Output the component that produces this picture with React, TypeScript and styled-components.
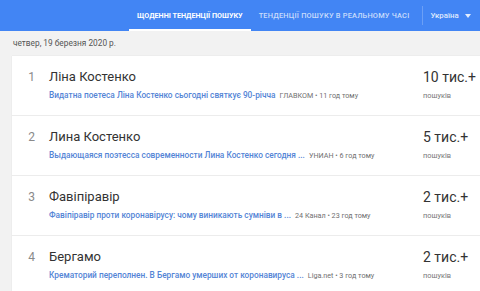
import React, {FC} from 'react';
import styled, {createGlobalStyle} from 'styled-components';

const Global = createGlobalStyle`
  html, body {
    margin: 0;
    padding: 0;
    background: #f2f2f2;
    font-family: Roboto, "Noto Sans", Arial, sans-serif;
    overflow: hidden;
  }
`;

const Header = styled.div`
  height: 31px;
  background: #4285f4;
  display: flex;
  align-items: stretch;
  padding-left: 129px;
  white-space: nowrap;
`;

const Tab = styled.div<{active?: boolean}>`
  display: flex;
  align-items: center;
  padding: 0 8px;
  font-size: ${p => p.active ? '7.2px' : '7.4px'};
  letter-spacing: ${p => p.active ? '0' : '0.2px'};
  font-weight: ${p => p.active ? 700 : 500};
  color: ${p => p.active ? '#fff' : 'rgba(255,255,255,0.72)'};
  border-bottom: 2px solid ${p => p.active ? '#fff' : 'transparent'};
  box-sizing: border-box;
  padding-top: 2px;
`;

const Divider = styled.div`
  width: 1px;
  background: rgba(255,255,255,0.22);
  margin: 6px 7px 6px 5px;
`;

const Country = styled.div`
  display: flex;
  align-items: center;
  gap: 6px;
  font-size: 7.8px;
  font-weight: 500;
  color: rgba(255,255,255,0.85);
`;

const Arrow = styled.span`
  width: 0;
  height: 0;
  border-left: 3.5px solid transparent;
  border-right: 3.5px solid transparent;
  border-top: 4px solid rgba(255,255,255,0.85);
`;

const DateLine = styled.div`
  font-size: 8.3px;
  color: #555;
  padding: 7px 0 0 13px;
  height: 18px;
`;

const Card = styled.div`
  margin-left: 12px;
  background: #fff;
  box-shadow: 0 0 1px rgba(0,0,0,0.12);
`;

const Row = styled.div`
  display: grid;
  grid-template-columns: 37px 1fr 57px;
  height: 60px;
  border-bottom: 1px solid #ececec;
  box-sizing: border-box;
  padding-top: 13px;
`;

const Num = styled.div`
  font-size: 12px;
  color: #8a8a8a;
  text-align: right;
  padding-right: 14px;
  line-height: 16px;
`;

const Main = styled.div`
  display: flex;
  flex-direction: column;
  gap: 5px;
  min-width: 0;
`;

const Title = styled.div`
  font-size: 13px;
  color: #333;
  line-height: 16px;
`;

const Sub = styled.div`
  display: flex;
  align-items: baseline;
  gap: 4px;
  white-space: nowrap;
`;

const Link = styled.span`
  font-size: 8.3px;
  font-weight: 500;
  color: #5485d6;
`;

const Source = styled.span`
  font-size: 7.2px;
  color: #707070;
`;

const Count = styled.div`
  display: flex;
  flex-direction: column;
  gap: 6px;
`;

const Big = styled.div`
  font-size: 14px;
  color: #333;
  line-height: 16px;
`;

const Small = styled.div`
  font-size: 7.4px;
  color: #777;
`;

type Item = {
  title: string
  link: string
  source: string
  count: string
}

const items: Item[] = [
  {title: 'Ліна Костенко', link: 'Видатна поетеса Ліна Костенко сьогодні святкує 90-річча', source: 'ГЛАВКОМ • 11 год тому', count: '10 тис.+'},
  {title: 'Лина Костенко', link: 'Выдающаяся поэтесса современности Лина Костенко сегодня ...', source: 'УНИАН • 6 год тому', count: '5 тис.+'},
  {title: 'Фавіпіравір', link: 'Фавіпіравір проти коронавірусу: чому виникають сумніви в ...', source: '24 Канал • 23 год тому', count: '2 тис.+'},
  {title: 'Бергамо', link: 'Крематорий переполнен. В Бергамо умерших от коронавируса ...', source: 'Liga.net • 3 год тому', count: '2 тис.+'},
];

const TrendRow: FC<{item: Item, index: number}> = ({item, index}) => (
  <Row>
    <Num>{index}</Num>
    <Main>
      <Title>{item.title}</Title>
      <Sub>
        <Link>{item.link}</Link>
        <Source>{item.source}</Source>
      </Sub>
    </Main>
    <Count>
      <Big>{item.count}</Big>
      <Small>пошуків</Small>
    </Count>
  </Row>
);

export default function App() {
  return (
    <>
      <Global/>
      <Header>
        <Tab active>ЩОДЕННІ ТЕНДЕНЦІЇ ПОШУКУ</Tab>
        <Tab>ТЕНДЕНЦІЇ ПОШУКУ В РЕАЛЬНОМУ ЧАСІ</Tab>
        <Divider/>
        <Country>Україна <Arrow/></Country>
      </Header>
      <DateLine>четвер, 19 березня 2020 р.</DateLine>
      <Card>
        {items.map((it, i) => <TrendRow key={i} item={it} index={i + 1}/>)}
      </Card>
    </>
  );
}
